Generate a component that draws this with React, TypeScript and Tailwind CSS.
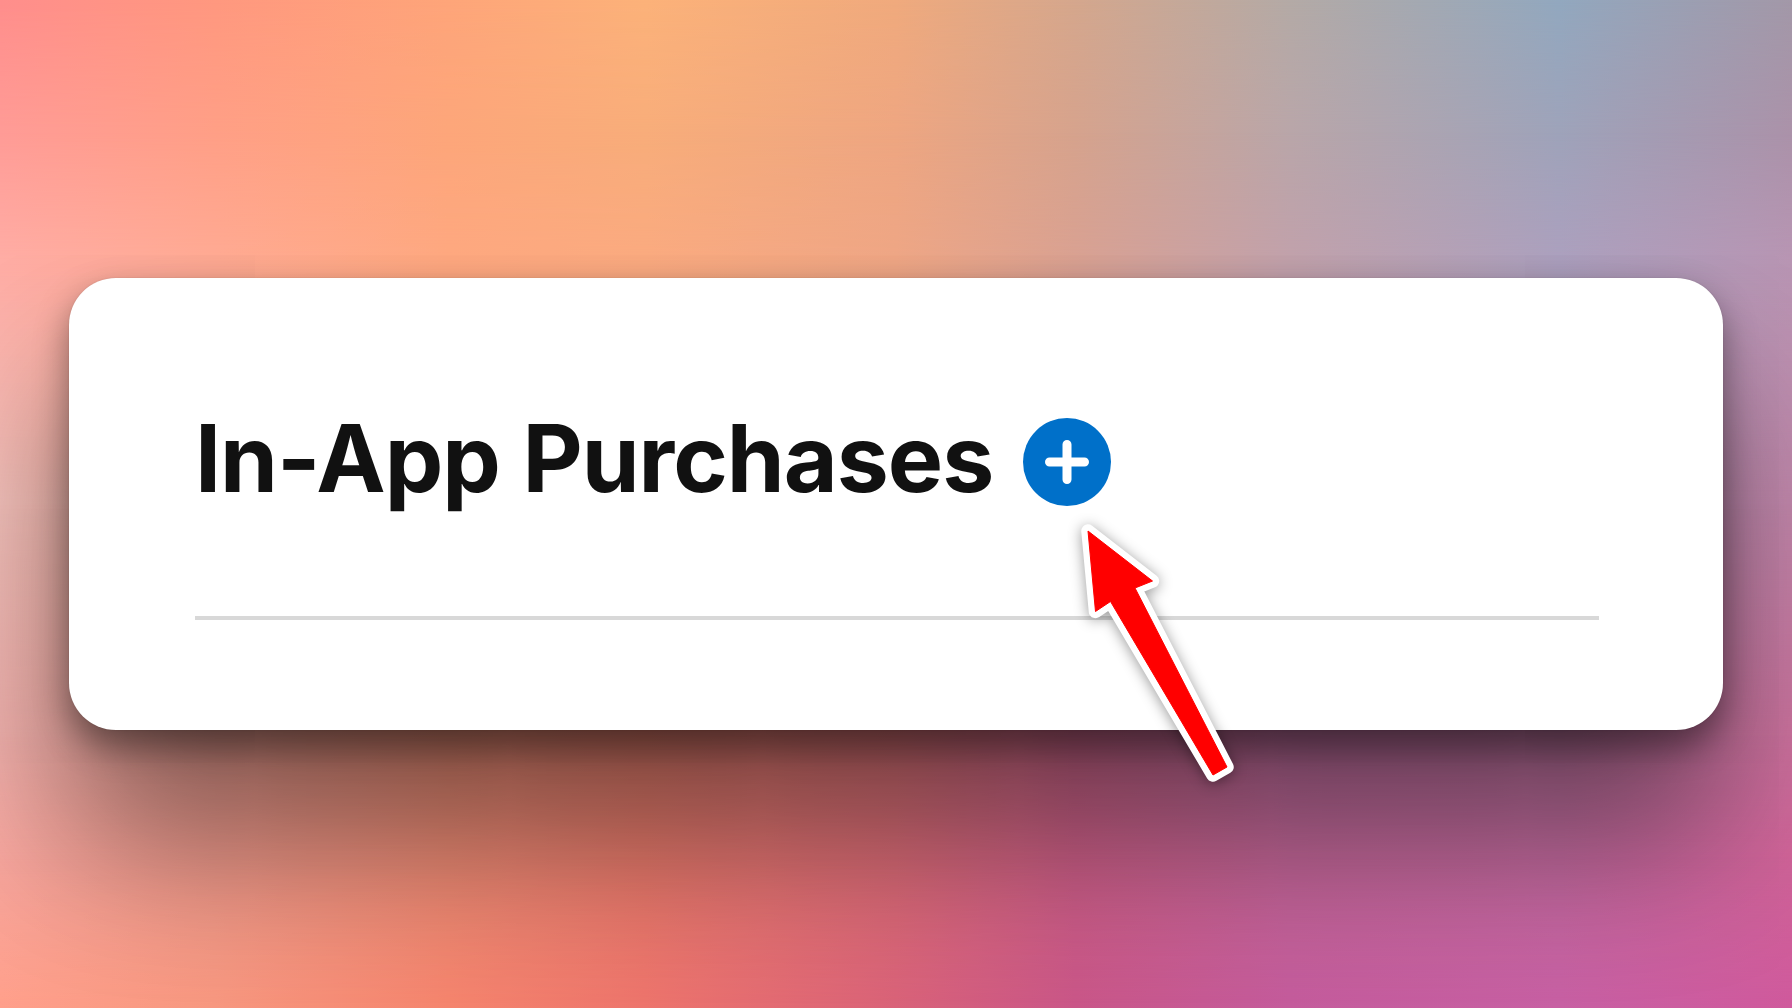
const columns = [0, 12, 25, 36, 50, 60, 72, 87, 100];

const bands = [
  { at: 0, colors: ['#ff8e8c', '#ff987f', '#fea57a', '#fcb27a', '#f0aa7d', '#d5a78d', '#b4aaa6', '#92a8bf', '#a398a8'] },
  { at: 13, colors: ['#ff9b96', '#ff9f86', '#fda67a', '#f8ad7a', '#eea681', '#d6a38d', '#b9a6a9', '#9ea3ba', '#ab92a9'] },
  { at: 26, colors: ['#ffada5', '#ffaa93', '#fea880', '#faaa80', '#eea685', '#d9a192', '#c1a1ab', '#aca0be', '#b895b3'] },
  { at: 50, colors: ['#f6c2bc', '#f8ac9c', '#f59c83', '#ef9580', '#e28f88', '#d08a98', '#c089ac', '#b78bb2', '#c489ad'] },
  { at: 73, colors: ['#f3b2ae', '#f0a196', '#eb8e78', '#e78070', '#de757a', '#ce688c', '#c070a0', '#c076a2', '#ce739f'] },
  { at: 85, colors: ['#f8a79f', '#f09a8c', '#ee8b75', '#e97a6c', '#dc6c78', '#cd5f88', '#c46799', '#c56ba0', '#d16499'] },
  { at: 100, colors: ['#ff9f8a', '#f7977f', '#f5846d', '#ed746c', '#d96279', '#c95688', '#c45b9c', '#c75fa3', '#cf599c'] },
];

function Backdrop() {
  return (
    <div className="absolute inset-0">
      {bands.map((band, i) => {
        const mask =
          i === 0 ? undefined : `linear-gradient(to bottom, transparent ${bands[i - 1].at}%, black ${band.at}%)`;
        return (
          <div
            key={band.at}
            className="absolute inset-0"
            style={{
              backgroundImage: `linear-gradient(to right, ${band.colors.map((c, j) => `${c} ${columns[j]}%`).join(', ')})`,
              maskImage: mask,
            }}
          />
        );
      })}
    </div>
  );
}

function Pointer() {
  const shape = 'M1088 531 L1152.5 581 L1135 588 L1227 767 L1213 775 L1110.5 601.5 L1095.5 611.5 Z';
  return (
    <svg
      className="pointer-events-none absolute inset-0 h-[1008px] w-[1792px] drop-shadow-[0_2px_7px_rgba(0,0,0,0.4)]"
      viewBox="0 0 1792 1008"
    >
      <path d={shape} fill="#fff" stroke="#fff" strokeWidth="13.5" strokeLinejoin="round" />
      <path d={shape} fill="#f00" stroke="#f00" strokeWidth="1" strokeLinejoin="round" />
    </svg>
  );
}

export default function App() {
  return (
    <main className="relative flex h-[1008px] w-[1792px] items-center justify-center overflow-hidden">
      <Backdrop />
      <section className="relative mx-auto h-[452px] w-[1654px] rounded-[47px] bg-white pr-[124px] pl-[126px] pt-[126px] shadow-[0_0_2px_rgba(0,0,0,0.12),0_16px_34px_rgba(0,0,0,0.42),0_108px_150px_rgba(0,0,0,0.46)]">
        <header className="flex h-[116px] items-center gap-[30px]">
          <h1 className="w-[798px] whitespace-nowrap pb-[7px] font-['Inter',sans-serif] text-[93px] font-bold leading-[109px] tracking-[-1.02px] [word-spacing:1.5px] text-[#111]">
            In-App Purchases
          </h1>
          <button aria-label="Add" className="flex size-[88px] shrink-0 items-center justify-center rounded-full bg-[#0070c9]">
            <svg viewBox="0 0 44 44" className="size-11" stroke="#fff" strokeWidth="9" strokeLinecap="round">
              <path d="M4.5 22h35M22 4.5v35" />
            </svg>
          </button>
        </header>
        <hr className="mt-24 h-1 border-0 bg-[#d8d8d8]" />
      </section>
      <Pointer />
    </main>
  );
}
